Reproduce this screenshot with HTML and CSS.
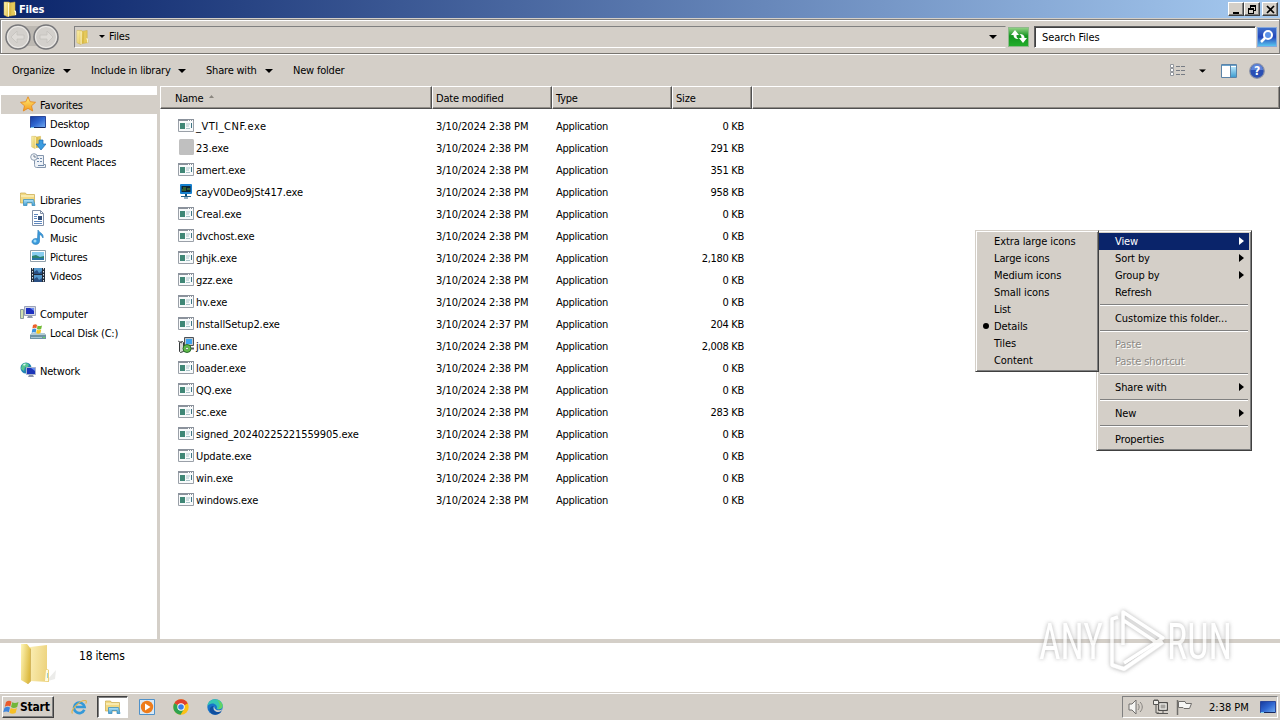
FILE: index.html
```
<!DOCTYPE html>
<html lang="en">
<head>
  <meta charset="utf-8">
  <title>Files</title>
  <link rel="stylesheet" href="styles.css">
</head>
<body>

  <!-- shared icons -->
  <svg class="sprite" width="0" height="0">
    <defs>
      <linearGradient id="gold" x1="0" x2="1" y1="0" y2="0.4">
        <stop offset="0" stop-color="#fff6b8"/>
        <stop offset="1" stop-color="#dcb93f"/>
      </linearGradient>
      <linearGradient id="paleGold" x1="0" x2="1" y1="0" y2="0.2">
        <stop offset="0" stop-color="#fbeeb4"/>
        <stop offset="1" stop-color="#ecd27c"/>
      </linearGradient>
      <linearGradient id="screen" x1="0" x2="1" y1="0" y2="1">
        <stop offset="0" stop-color="#17399b"/>
        <stop offset="0.5" stop-color="#2f66d0"/>
        <stop offset="1" stop-color="#74aef0"/>
      </linearGradient>
      <linearGradient id="glass" x1="0" x2="0" y1="0" y2="1">
        <stop offset="0" stop-color="#b5e4fa"/>
        <stop offset="1" stop-color="#3f9dd0"/>
      </linearGradient>
      <linearGradient id="starFill" x1="0" x2="0" y1="0" y2="1">
        <stop offset="0" stop-color="#fff07a"/>
        <stop offset="1" stop-color="#f49a1c"/>
      </linearGradient>
    </defs>
    <symbol id="folder" viewBox="0 0 16 16">
      <path d="M7 2l6-1v9l1 1v3l-6 1z" fill="#e5c95a" stroke="#c8a93e" stroke-width=".5"/>
      <path d="M2 1h5l2 2v11l-3 2-4-2z" fill="url(#gold)" stroke="#ceb350" stroke-width=".5"/>
      <path d="M6.500 2v13.500" stroke="#fffbd5"/>
      <path d="M12 10h1.500v4" fill="none" stroke="#fffbe0"/>
    </symbol>
    <symbol id="exe" viewBox="0 0 16 13">
      <path d="M.5.5h15v12H.500z" fill="#f8fafb" stroke="#9aa0a8"/>
      <path d="M0 1h16" stroke="#8b929c" stroke-width="2"/>
      <path d="M10 1.500h1m1 0h1m1 0h1" stroke="#fff"/>
      <path d="M2 4h5v6H2z" fill="#3f8776"/>
      <path d="M8 5h4M8 7h3M8 9.500h4" stroke="#a9c4c9"/>
      <path d="M13.500 4v5" stroke="#3f7584"/>
    </symbol>
    <symbol id="arrow" viewBox="0 0 5 8">
      <path d="M0 0l5 4-5 4z" fill="currentColor"/>
    </symbol>
    <symbol id="down" viewBox="0 0 8 4">
      <path d="M0 0h8L4 4z" fill="currentColor"/>
    </symbol>
    <symbol id="libraries" viewBox="0 0 16 16">
      <path d="M.5 3.500V2h5l1 1.500h8V12H.500z" fill="#f2d983" stroke="#c9a94a" stroke-width=".7"/>
      <path d="M1 5h13" stroke="#fffbd8"/>
      <path d="M3.500 14.500V8.500h10l1.500 6h-3v-3h-5v3z" fill="url(#glass)" stroke="#3f90bd" stroke-width=".8"/>
    </symbol>
    <symbol id="desktop" viewBox="0 0 16 13">
      <path d="M.5.5h15v11H.500z" fill="url(#screen)" stroke="#2b479a"/>
      <path d="M1 11.500h14" stroke="#16285f"/>
      <path d="M1 11.500h3" stroke="#7fd0f0"/>
    </symbol>
  </svg>

  <header class="titlebar">
    <svg class="icon16"><use href="#folder"/></svg>
    <span class="title">Files</span>
    <div class="window-buttons">
      <button><svg width="9" height="9"><path d="M1 7h6v2H1z"/></svg></button>
      <button><svg width="10" height="9"><path d="M3 0h6v6H7V5h1V2H4v1H3zM1 3h6v6H1zm1 2v3h4V5z" fill-rule="evenodd"/></svg></button>
      <button class="close"><svg width="9" height="9"><path d="M1 1l7 7M8 1L1 8" stroke="#000" stroke-width="1.700"/></svg></button>
    </div>
  </header>

  <div class="addressbar">
    <svg class="nav-buttons" width="56" height="28" viewBox="0 0 56 28">
      <path d="M14 3h28v20H14z" fill="#bdb9b3"/>
      <circle cx="14" cy="14" r="12" fill="#d3d0cc" stroke="#77777a" stroke-width="1.500"/>
      <circle cx="14" cy="14" r="10.500" fill="none" stroke="#efedea"/>
      <circle cx="42" cy="14" r="12" fill="#d3d0cc" stroke="#77777a" stroke-width="1.500"/>
      <circle cx="42" cy="14" r="10.500" fill="none" stroke="#efedea"/>
      <path d="M7 14l6-6v4h7v4h-7v4zM49 14l-6-6v4h-7v4h7v4z" fill="#dedbd7" stroke="#c4c1bd" stroke-width=".8"/>
    </svg>
    <div class="path">
      <svg class="icon16"><use href="#folder"/></svg>
      <svg class="path-arrow" width="6" height="3"><use href="#down"/></svg>
      <span>Files</span>
      <svg class="path-drop" width="8" height="4"><use href="#down"/></svg>
    </div>
    <div class="refresh">
      <svg width="18" height="18" viewBox="0 0 18 18">
        <path d="M1 7l4-5 4 5H6.500c0 2 .5 3 2 4-3 0-5-1-5-4z" fill="#fff"/>
        <path d="M17 10l-4 5-4-5h2.500c0-2-.5-3-2-4 3 0 5 1 5 4z" fill="#fff"/>
      </svg>
    </div>
    <div class="search">Search Files</div>
    <div class="search-button">
      <svg width="17" height="18" viewBox="0 0 17 18">
        <circle cx="10" cy="7" r="4" fill="#5b92e8" stroke="#fff" stroke-width="2"/>
        <path d="M7 10l-4 4" stroke="#fff" stroke-width="2.500"/>
      </svg>
    </div>
  </div>

  <div class="toolbar">
    <span class="command organize">Organize <svg width="8" height="4"><use href="#down"/></svg></span>
    <span class="command include">Include in library <svg width="8" height="4"><use href="#down"/></svg></span>
    <span class="command share">Share with <svg width="8" height="4"><use href="#down"/></svg></span>
    <span class="command">New folder</span>
    <div class="tools">
      <svg width="16" height="13" viewBox="0 0 16 13">
        <path d="M.5.5h3v3h-3zM.5 4.500h3v3h-3zM.5 8.500h3v3h-3z" fill="#fff" stroke="#92969c"/>
        <path d="M6 2.500h4m1 0h4M6 6.500h4m1 0h4M6 10.500h4m1 0h4" stroke="#777c84"/>
      </svg>
      <svg class="view-drop" width="7" height="4" viewBox="0 0 8 4"><use href="#down"/></svg>
      <svg class="preview" width="16" height="14" viewBox="0 0 16 14">
        <path d="M.5.5h15v13H.500z" fill="#fff" stroke="#5a83a8"/>
        <path d="M1 1.500h14" stroke="#6aa3cc"/>
        <path d="M10 3h5v10h-5z" fill="url(#glass)"/>
        <path d="M9.500 1v12" stroke="#5a83a8"/>
      </svg>
      <svg class="help" width="16" height="16" viewBox="0 0 16 16">
        <circle cx="8" cy="8" r="7.300" fill="#2a4fb4" stroke="#8c93a8" stroke-width="1.200"/>
        <path d="M2 7a6 6 0 0 1 12 0z" fill="#5d83d8"/>
        <text x="8" y="12.200" class="help-mark">?</text>
      </svg>
    </div>
  </div>

  <main class="explorer">
    <nav class="sidebar">
      <div class="group">
        <div class="place root selected">
          <svg class="icon16" viewBox="0 0 16 16"><path d="M8 .8l2.200 4.900 5.300.6-4 3.500 1.200 5.200L8 12.300 3.300 15l1.200-5.200-4-3.500 5.300-.6z" fill="url(#starFill)" stroke="#e58a22" stroke-width=".9"/></svg>
          Favorites
        </div>
        <div class="place"><svg class="icon16" viewBox="0 0 16 16"><use href="#desktop" y="1" width="16" height="13"/></svg>Desktop</div>
        <div class="place">
          <svg class="icon16" viewBox="0 0 16 16"><use href="#folder" width="13" height="16"/><path d="M9 6h4v4h3l-5 6-5-6h3z" fill="#3b9ce0" stroke="#1f6bb0" stroke-width=".7"/></svg>
          Downloads
        </div>
        <div class="place">
          <svg class="icon16" viewBox="0 0 16 16">
            <path d="M4.500 2.500h9v9h2v3h-9c-2 0-2-2-2-3z" fill="#eef2f7" stroke="#8496ad"/>
            <path d="M7 5.500h2m1 0h2M7 8.500h2m1 0h2M8 12.500h6" stroke="#6e88aa"/>
            <circle cx="4" cy="4" r="3.300" fill="#f4f6f8" stroke="#8f9eb2"/>
            <path d="M4 2v2h2" fill="none" stroke="#53647c" stroke-width=".8"/>
          </svg>
          Recent Places
        </div>
      </div>
      <div class="group">
        <div class="place root"><svg class="icon16"><use href="#libraries"/></svg>Libraries</div>
        <div class="place">
          <svg class="icon16" viewBox="0 0 16 16">
            <path d="M2.500.5h8l3 3v12h-11z" fill="#fff" stroke="#8291a8"/>
            <path d="M10.500.5v3h3" fill="none" stroke="#8291a8"/>
            <path d="M4 4.500h4M4 6.500h3M4 8.500h3M4 11.500h8M4 13.500h8" stroke="#5d86bd"/>
            <path d="M8 6h4v4H8z" fill="#33507b"/>
          </svg>
          Documents
        </div>
        <div class="place">
          <svg class="icon16" viewBox="0 0 16 16"><path d="M8 1c1 3 6 3 5 8-1-2-2-3-3.500-3.500V12c0 5-8 4-7.500.5.500-3 4-3.500 5.500-2.500z" fill="#3a9bdd" stroke="#2477b6" stroke-width=".6"/><circle cx="5" cy="12" r="1.500" fill="#9fdcf8"/></svg>
          Music
        </div>
        <div class="place">
          <svg class="icon16" viewBox="0 0 16 16"><path d="M.5 2.500h15v11H.500z" fill="#fff" stroke="#91a0ab"/><path d="M2 4h12v8H2z" fill="#88cdef"/><path d="M2 8l4-1 4 2 4-1v4H2z" fill="#2c826f"/><path d="M2 10h12v2H2z" fill="#2874a6"/></svg>
          Pictures
        </div>
        <div class="place">
          <svg class="icon16" viewBox="0 0 16 16"><path d="M1 1h14v14H1z" fill="#222c3a"/><path d="M4 1h8v6H4zM4 8h8v7H4z" fill="#5598cc"/><path d="M4 5l3-2 2 3 3-2v3H4zM4 12l3-2 2 3 3-2v4H4z" fill="#294f83"/><path d="M2.500 1v14M13.500 1v14" stroke="#e0e6ec" stroke-dasharray="1.500 1.500"/></svg>
          Videos
        </div>
      </div>
      <div class="group">
        <div class="place root">
          <svg class="icon16" viewBox="0 0 16 16"><path d="M.5 4.500h3v9h-3z" fill="#cfe0b0" stroke="#8898a0"/><path d="M4.500 1.500h11v9h-11z" fill="#d4d8e6" stroke="#9aa2b8"/><path d="M6 3h8v6H6z" fill="#1c2fc0"/><path d="M10 3h4v3z" fill="#6c8cf0"/><path d="M8 11h4l1 2H7z" fill="#8f98ad"/></svg>
          Computer
        </div>
        <div class="place">
          <svg class="icon16" viewBox="0 0 16 16"><path d="M2 9h12l2 2v4H0v-4z" fill="#6f93a4"/><path d="M2 9h12l2 2H0z" fill="#b3ccd5"/><path d="M1 13.500h11" stroke="#a9c7d2"/><path d="M13 13.500h2" stroke="#65e05a"/><path d="M3 1c2-1 3-1 4 0l-.6 3.500c-1-1-2.400-.8-4 0z" fill="#ec602c"/><path d="M7.500 1.500c1 .8 2.500.8 4.500 0L11.200 5c-1.700.8-3 .6-4.200 0z" fill="#72bb35"/><path d="M2.300 5.200c1.600-.8 3-.8 4 0l-.6 3.600c-1-.8-2.400-.8-4 0z" fill="#3b92dc"/><path d="M6.800 5.700c1.200.6 2.700.6 4.400 0l-.7 3.400c-1.600.8-3.200.7-4.300 0z" fill="#f8c620"/></svg>
          Local Disk (C:)
        </div>
      </div>
      <div class="group">
        <div class="place root">
          <svg class="icon16" viewBox="0 0 16 16"><circle cx="6" cy="6" r="5.500" fill="#2283b2"/><path d="M2 3c2-3 6-2 7 0L7 6 5 5 4 9 1 7z" fill="#59c690"/><path d="M3 2.500c1-1 2-1 3-.5L4 4z" fill="#d5f5f5"/><path d="M6.500 5.500h9v7h-9z" fill="#1c35b8" stroke="#aab3cd"/><path d="M11 6h4v3z" fill="#6890f0"/><path d="M9 13h4l1 2H8z" fill="#8a93ac"/></svg>
          Network
        </div>
      </div>
    </nav>

    <section class="files">
      <div class="row head">
        <span class="name">Name <svg width="5" height="3"><path d="M0 3h5L2.500 0z" fill="#8a867f"/></svg></span>
        <span class="date">Date modified</span>
        <span class="type">Type</span>
        <span class="size">Size</span>
        <span class="rest"></span>
      </div>
      <div class="rows">
        <div class="row"><span class="name caps"><svg class="exe"><use href="#exe"/></svg>_VTI_CNF.exe</span><span class="date">3/10/2024 2:38 PM</span><span class="type">Application</span><span class="size">0 KB</span></div>
        <div class="row"><span class="name"><svg class="exe tall" viewBox="0 0 16 16"><rect x="1" width="15" height="16" rx="1.500" fill="#c0c0c0"/></svg>23.exe</span><span class="date">3/10/2024 2:38 PM</span><span class="type">Application</span><span class="size">291 KB</span></div>
        <div class="row"><span class="name"><svg class="exe"><use href="#exe"/></svg>amert.exe</span><span class="date">3/10/2024 2:38 PM</span><span class="type">Application</span><span class="size">351 KB</span></div>
        <div class="row"><span class="name"><svg class="exe tall" viewBox="0 0 16 16"><rect x="2" y="1" width="12" height="10" rx="1" fill="#1681cf"/><path d="M3.500 3h9v6h-9z" fill="#0d2433"/><path d="M5 5h3m1 1h3M4 7h4" stroke="#5c9b31"/><path d="M7 11h2v2H7z" fill="#124f78"/><path d="M3 13.500h10M6 15h4" stroke="#26658c"/></svg>cayV0Deo9jSt417.exe</span><span class="date">3/10/2024 2:38 PM</span><span class="type">Application</span><span class="size">958 KB</span></div>
        <div class="row"><span class="name"><svg class="exe"><use href="#exe"/></svg>Creal.exe</span><span class="date">3/10/2024 2:38 PM</span><span class="type">Application</span><span class="size">0 KB</span></div>
        <div class="row"><span class="name"><svg class="exe"><use href="#exe"/></svg>dvchost.exe</span><span class="date">3/10/2024 2:38 PM</span><span class="type">Application</span><span class="size">0 KB</span></div>
        <div class="row"><span class="name"><svg class="exe"><use href="#exe"/></svg>ghjk.exe</span><span class="date">3/10/2024 2:38 PM</span><span class="type">Application</span><span class="size">2,180 KB</span></div>
        <div class="row"><span class="name"><svg class="exe"><use href="#exe"/></svg>gzz.exe</span><span class="date">3/10/2024 2:38 PM</span><span class="type">Application</span><span class="size">0 KB</span></div>
        <div class="row"><span class="name"><svg class="exe"><use href="#exe"/></svg>hv.exe</span><span class="date">3/10/2024 2:38 PM</span><span class="type">Application</span><span class="size">0 KB</span></div>
        <div class="row"><span class="name"><svg class="exe"><use href="#exe"/></svg>InstallSetup2.exe</span><span class="date">3/10/2024 2:37 PM</span><span class="type">Application</span><span class="size">204 KB</span></div>
        <div class="row"><span class="name"><svg class="exe tall" viewBox="0 0 16 16"><path d="M6.500.5h9v8h-9z" fill="#c4c8cc" stroke="#4c5358"/><path d="M8 2h6v5H8z" fill="#3da4f0"/><path d="M7 10.500h9v2H7z" fill="#555c62"/><path d="M1.500 5.500l3-1 1 1v9l-3 1-1-1z" fill="#d6d7d4" stroke="#34383a"/><path d="M0 4l4 2" stroke="#555"/><circle cx="9" cy="11.500" r="4" fill="#62bd4b" stroke="#286b2d"/><circle cx="9" cy="11.500" r="1.300" fill="#fff" stroke="#286b2d" stroke-width=".6"/></svg>june.exe</span><span class="date">3/10/2024 2:38 PM</span><span class="type">Application</span><span class="size">2,008 KB</span></div>
        <div class="row"><span class="name"><svg class="exe"><use href="#exe"/></svg>loader.exe</span><span class="date">3/10/2024 2:38 PM</span><span class="type">Application</span><span class="size">0 KB</span></div>
        <div class="row"><span class="name"><svg class="exe"><use href="#exe"/></svg>QQ.exe</span><span class="date">3/10/2024 2:38 PM</span><span class="type">Application</span><span class="size">0 KB</span></div>
        <div class="row"><span class="name"><svg class="exe"><use href="#exe"/></svg>sc.exe</span><span class="date">3/10/2024 2:38 PM</span><span class="type">Application</span><span class="size">283 KB</span></div>
        <div class="row"><span class="name"><svg class="exe"><use href="#exe"/></svg>signed_20240225221559905.exe</span><span class="date">3/10/2024 2:38 PM</span><span class="type">Application</span><span class="size">0 KB</span></div>
        <div class="row"><span class="name"><svg class="exe"><use href="#exe"/></svg>Update.exe</span><span class="date">3/10/2024 2:38 PM</span><span class="type">Application</span><span class="size">0 KB</span></div>
        <div class="row"><span class="name"><svg class="exe"><use href="#exe"/></svg>win.exe</span><span class="date">3/10/2024 2:38 PM</span><span class="type">Application</span><span class="size">0 KB</span></div>
        <div class="row"><span class="name"><svg class="exe"><use href="#exe"/></svg>windows.exe</span><span class="date">3/10/2024 2:38 PM</span><span class="type">Application</span><span class="size">0 KB</span></div>
      </div>
    </section>
  </main>

  <footer class="details">
    <svg width="40" height="44" viewBox="0 0 40 44">
      <path d="M28 36l8-9-1 9-7 2z" fill="#ececea"/>
      <path d="M10 4l17-2v24l2 1v12l-19-1z" fill="url(#paleGold)"/>
      <path d="M26 27h2v11h-3z" fill="#fffbe2"/>
      <path d="M27.500 30v5" stroke="#9fd0d0"/>
      <path d="M1 1h6l4 5v32l-3 3-7-4z" fill="url(#gold)"/>
      <path d="M10.500 6v32l-3 3" fill="none" stroke="#d4b65c"/>
    </svg>
    <span>18 items</span>
  </footer>

  <div class="taskbar">
    <button class="start">
      <svg width="16" height="15" viewBox="0 0 16 15"><path d="M3 2c2-1.500 4-1.500 5.500-.3L7.300 6.600C5.700 5.500 4 5.700 1.800 6.800z" fill="#ea5b2c"/><path d="M9.200 2.200c1.800 1 3.600 1 6.300-.2l-1.300 5c-2.400 1.200-4.500 1.200-6.200 0z" fill="#72b63a"/><path d="M1.500 7.700c2.200-1.200 4-1.200 5.500-.1l-1.200 4.700c-1.700-1.200-3.600-1-5.600 0z" fill="#3f86dc"/><path d="M7.700 8.100c1.800 1 3.800 1 6.200-.1L12.600 13c-2.300 1.100-4.500 1-6.200-.2z" fill="#f6bf25"/></svg>
      Start
    </button>
    <div class="quick">
      <svg width="16" height="16" viewBox="0 0 16 16">
        <path d="M13.300 10.800A5.300 5.300 0 1 1 13.600 8H5" fill="none" stroke="#3499d8" stroke-width="2.600"/>
        <path d="M1.500 14.500C-1 12 8 1 14.500 1.500c1.200.2 1 1.800.2 3" fill="none" stroke="#e3b64b" stroke-width="1.200"/>
      </svg>
    </div>
    <div class="quick active"><svg width="16" height="16"><use href="#libraries"/></svg></div>
    <div class="quick">
      <svg width="16" height="16" viewBox="0 0 16 16"><path d="M.5.5h15v15H.500z" fill="#d9e9f6" stroke="#4f91c9"/><circle cx="8" cy="8" r="6.200" fill="#ee7c1b"/><path d="M6 4.500v7L11.500 8z" fill="#fff"/></svg>
    </div>
    <div class="quick">
      <svg width="16" height="16" viewBox="0 0 16 16"><circle cx="8" cy="8" r="7.700" fill="#fbc116"/><path d="M8 8L1.300 4.200A7.700 7.700 0 0 1 14.700 4.200z" fill="#df4030"/><path d="M1.300 4.200A7.700 7.700 0 0 0 7.500 15.700L11.300 9.500 8 8z" fill="#2fa34f"/><path d="M8 4.300h6.800l-.1-.2L8 8z" fill="#df4030"/><circle cx="8" cy="8" r="3.700" fill="#fff"/><circle cx="8" cy="8" r="2.800" fill="#397ee8"/></svg>
    </div>
    <div class="quick">
      <svg width="16" height="16" viewBox="0 0 16 16"><circle cx="8" cy="8" r="7.700" fill="#1774ca"/><path d="M.5 7C1 2.500 4.300.3 8 .3c4.800 0 8 3.500 7.700 6.800-.3 3-3.700 3.900-6 2.800.6-1.600.4-3.900-2.200-5C4.800 3.900 2 5 .5 7z" fill="#35c5b4"/><path d="M10 1c3 .8 5.500 3 5.700 5.800-.2 3-3.200 3.900-5 3.300 3-2 2.500-6-.7-9.100z" fill="#62d365"/><path d="M6.500 7c-1.600 4 2 7 6.500 5 1-.4 1.700 0 1 1-3 3.500-8 3.500-10.500.5-2-3-.3-6.500 3-6.500z" fill="#104f9f"/><path d="M7.300 7.300c-.5 3 2.800 5 7 3.400l1-.7-1 2c-3 2.300-8 .7-7.700-3.500z" fill="#d4cfc8"/></svg>
    </div>
    <div class="tray">
      <svg width="17" height="16" viewBox="0 0 17 16"><path d="M1 5h3l4-4v14l-4-4H1z" fill="#f5f5f3" stroke="#716f6c"/><path d="M10 5c1.500 2 1.500 4 0 6M12 3c3 3 3 7 0 10" fill="none" stroke="#85827e"/></svg>
      <svg width="17" height="16" viewBox="0 0 17 16"><path d="M6.500 3.500h9v8h-9z" fill="#aaa8a4" stroke="#4f4e4c"/><path d="M8 5h6v5H8z" fill="#a5a39f" stroke="#f4f4f0"/><path d="M5 14.500h11M11 12v2" stroke="#565553"/><path d="M1.500 1.500v4h5v-4z" fill="#f0efec" stroke="#575654"/><path d="M4 5v9h3M3 0v2M5 0v2" fill="none" stroke="#575654"/></svg>
      <svg width="17" height="16" viewBox="0 0 17 16"><path d="M1.500 1v15" stroke="#706e6b" stroke-width="1.500"/><path d="M2.500 2.500H9l1 2h5.500l-2 5H8l-1-1H2.500z" fill="#f6f6f4" stroke="#706e6b"/></svg>
      <span class="clock">2:38 PM</span>
      <svg class="show-desktop" width="16" height="13"><use href="#desktop"/></svg>
    </div>
  </div>

  <div class="menu context">
    <div class="item hover">View <svg width="5" height="8"><use href="#arrow"/></svg></div>
    <div class="item">Sort by <svg width="5" height="8"><use href="#arrow"/></svg></div>
    <div class="item">Group by <svg width="5" height="8"><use href="#arrow"/></svg></div>
    <div class="item">Refresh</div>
    <hr>
    <div class="item wide">Customize this folder...</div>
    <hr>
    <div class="item disabled">Paste</div>
    <div class="item disabled">Paste shortcut</div>
    <hr>
    <div class="item">Share with <svg width="5" height="8"><use href="#arrow"/></svg></div>
    <hr>
    <div class="item">New <svg width="5" height="8"><use href="#arrow"/></svg></div>
    <hr>
    <div class="item">Properties</div>
  </div>

  <div class="menu submenu">
    <div class="item">Extra large icons</div>
    <div class="item">Large icons</div>
    <div class="item">Medium icons</div>
    <div class="item">Small icons</div>
    <div class="item">List</div>
    <div class="item checked">Details</div>
    <div class="item">Tiles</div>
    <div class="item">Content</div>
  </div>

  <svg class="watermark" width="240" height="80" viewBox="0 0 240 80">
    <text x="7" y="58" textLength="64" lengthAdjust="spacingAndGlyphs">ANY</text>
    <text x="135" y="58" textLength="65" lengthAdjust="spacingAndGlyphs">RUN</text>
    <path class="mark-edge" d="M131 41L92 68l-12-4"/>
    <path class="mark-line" d="M86 16l-6 2v46l12 4 39-27M91 44V11l40 26-39 25M91 19l33 22"/>
  </svg>

</body>
</html>
```
FILE: styles.css
```
* {
  box-sizing: border-box;
}

body {
  margin: 0;
  width: 1280px;
  height: 720px;
  display: flex;
  flex-direction: column;
  overflow: hidden;
  position: relative;
  background: #d4cfc8;
  color: #000;
  font-family: "DejaVu Sans Condensed", "DejaVu Sans", sans-serif;
  font-stretch: condensed;
  font-size: 11px;
  letter-spacing: -0.2px;
  line-height: 14px;
  white-space: nowrap;
}

svg {
  flex: none;
}

.sprite {
  position: absolute;
}

.icon16 {
  width: 16px;
  height: 16px;
}

/* title bar */
.titlebar {
  height: 18px;
  display: flex;
  align-items: center;
  padding: 0 2px;
  background: linear-gradient(to right, #0a246a, #a6caf0);
  color: #fff;
}

.title {
  margin-left: 1px;
  padding-top: 1px;
  font-weight: bold;
}

.window-buttons {
  margin-left: auto;
  display: flex;
}

button {
  padding: 0;
  border: 1px solid;
  border-color: #fff #404040 #404040 #fff;
  box-shadow: inset -1px -1px #808080;
  background: #d4cfc8;
  font: inherit;
  letter-spacing: inherit;
}

.window-buttons button {
  width: 16px;
  height: 14px;
  display: flex;
  align-items: center;
  justify-content: center;
}

.window-buttons .close {
  margin-left: 2px;
}

/* address bar */
.addressbar {
  height: 35px;
  margin-top: 1px;
  display: flex;
  align-items: center;
  padding: 0 1px 0 3px;
  border: 1px solid #808080;
  border-bottom-color: #77746f;
  box-shadow: inset 1px 1px #fff, 0 1px #fff;
}

.nav-buttons {
  margin-right: 14px;
}

.path {
  width: 932px;
  height: 22px;
  display: flex;
  align-items: center;
  border: 1px solid;
  border-color: #808080 #d4cfc8 #fff #808080;
}

.path .icon16 {
  width: 15px;
}

.path-arrow {
  margin: 0 4px 0 9px;
}

.path-drop {
  margin-left: auto;
  margin-right: 8px;
}

.refresh {
  width: 21px;
  height: 20px;
  margin-left: 2px;
  display: flex;
  align-items: center;
  justify-content: center;
  border: 1px solid #8fb98c;
  background: linear-gradient(#8fd083, #149420 45%, #22ad2b);
}

.search {
  width: 222px;
  height: 22px;
  margin-left: 5px;
  padding: 4px 7px 0;
  border: 1px solid;
  border-color: #606060 #fff #fff #606060;
  box-shadow: inset 1px 1px #404040;
  background: #fff;
  letter-spacing: -0.1px;
}

.search-button {
  width: 20px;
  height: 20px;
  margin-left: 1px;
  border: 1px solid #86a8dc;
  background: linear-gradient(#3e6fc9, #2346bb 50%, #58c4ef);
}

/* command bar */
.toolbar {
  height: 31px;
  display: flex;
  align-items: center;
  padding: 0 15px 0 12px;
  margin-top: 1px;
}

.command {
  display: flex;
  align-items: center;
  justify-content: space-between;
}

.organize {
  width: 59px;
  margin-right: 20px;
}

.include {
  width: 95px;
  margin-right: 20px;
}

.share {
  width: 67px;
  margin-right: 20px;
}

.tools {
  margin-left: auto;
  display: flex;
  align-items: center;
}

.view-drop {
  margin: 0 15px 0 13px;
}

.help {
  margin-left: 12px;
}

.help-mark {
  fill: #fff;
  font-size: 12px;
  font-weight: bold;
  text-anchor: middle;
}

/* explorer */
.explorer {
  height: 553px;
  display: flex;
  background: #fff;
}

.sidebar {
  width: 160px;
  padding-top: 9px;
  border-right: 3px solid #d4cfc8;
}

.group {
  margin-bottom: 19px;
}

.place {
  height: 19px;
  display: flex;
  align-items: center;
  gap: 4px;
  padding-left: 30px;
  padding-top: 2px;
}

.place svg {
  margin-bottom: 3px;
}

.place.root {
  padding-left: 20px;
}

.selected {
  margin-left: 1px;
  background: #d4cfc8;
}

.place.selected {
  padding-left: 19px;
}

.files {
  flex: 1;
}

.row {
  display: grid;
  grid-template-columns: 272px 120px 120px 80px 1fr;
  height: 22px;
  align-items: center;
}

.head {
  height: 23px;
  background: #d4cfc8;
}

.head span {
  height: 23px;
  padding: 5px 3px 0;
  border: 1px solid;
  border-color: #fff #505050 #505050 #fff;
  box-shadow: inset -1px -1px #918d87;
}

.head .name {
  padding-left: 14px;
}

.head .name svg {
  margin: 0 0 4px 3px;
}

.rows {
  padding-top: 6px;
}

.rows .row span {
  padding-top: 1px;
  letter-spacing: -0.08px;
}

.rows .row .name {
  display: flex;
  align-items: center;
  padding-left: 18px;
  letter-spacing: -0.1px;
}

.rows .row .caps {
  letter-spacing: 0.5px;
}

.exe {
  width: 16px;
  height: 13px;
  margin: 0 2px 3px 0;
}

.exe.tall {
  height: 16px;
}

.rows .date,
.rows .type {
  padding-left: 4px;
}

.rows .row .type {
  letter-spacing: -0.3px;
}

.rows .row .size {
  padding-right: 8px;
  text-align: right;
  letter-spacing: -0.3px;
}

/* details pane */
.details {
  height: 53px;
  display: flex;
  padding-left: 20px;
  border-top: 4px solid #d4cfc8;
  background: #fff;
}

.details span {
  margin: 6px 0 0 19px;
  font-size: 12px;
}

/* taskbar */
.taskbar {
  height: 28px;
  display: flex;
  align-items: center;
  padding: 1px 2px 0 2px;
  border-top: 1px solid #d4cfc8;
  box-shadow: inset 0 1px #fff;
}

.start {
  width: 52px;
  height: 22px;
  margin-right: 9px;
  display: flex;
  align-items: center;
  gap: 1px;
  font-size: 12px;
  font-weight: bold;
}

.quick {
  width: 31px;
  height: 22px;
  margin-right: 3px;
  display: flex;
  align-items: center;
  justify-content: center;
}

.active {
  border: 1px solid;
  border-color: #404040 #fff #fff #404040;
  box-shadow: inset 1px 1px #808080;
  background: #fff;
}

.tray {
  width: 156px;
  height: 22px;
  margin-left: auto;
  display: flex;
  align-items: center;
  gap: 7px;
  padding-left: 5px;
  border: 1px solid;
  border-color: #808080 #fff #fff #808080;
}

.clock {
  margin-left: 9px;
  padding-top: 1px;
  letter-spacing: 0;
}

.show-desktop {
  margin-left: 4px;
}

/* menus */
.menu {
  position: absolute;
  top: 230px;
  padding: 2px;
  background: #d4cfc8;
  border: 1px solid;
  border-color: #d4cfc8 #404040 #404040 #d4cfc8;
  box-shadow: inset 1px 1px #fff, inset -1px -1px #808080;
}

.context {
  left: 1096px;
  width: 156px;
}

.submenu {
  left: 975px;
  width: 124px;
}

.item {
  height: 17px;
  display: flex;
  align-items: center;
  justify-content: space-between;
  padding: 0 5px 0 16px;
  letter-spacing: -0.1px;
}

.item svg {
  margin-bottom: 2px;
}

.wide {
  letter-spacing: -0.05px;
}

.hover {
  background: #0a246a;
  color: #fff;
}

.disabled {
  color: #8d8a86;
  text-shadow: 1px 1px #fff;
}

.menu hr {
  margin: 3px 1px 4px;
  border: 0;
  border-top: 1px solid #808080;
  border-bottom: 1px solid #fff;
}

.checked {
  justify-content: flex-start;
}

.checked::before {
  content: "";
  width: 6px;
  height: 6px;
  margin: 0 5px 1px -11px;
  border-radius: 50%;
  background: #000;
}

/* watermark */
.watermark {
  position: absolute;
  left: 1032px;
  top: 601px;
  opacity: 0.75;
  filter: drop-shadow(0 0 2px #999);
}

.watermark text {
  font-family: Roboto, sans-serif;
  font-size: 50px;
  letter-spacing: 0;
  fill: #fff;
}

.mark-edge,
.mark-line {
  fill: none;
  stroke: #fff;
  stroke-width: 3.5;
  stroke-linejoin: round;
}

.mark-edge {
  stroke: #e2e2e2;
  stroke-width: 5;
}
```
